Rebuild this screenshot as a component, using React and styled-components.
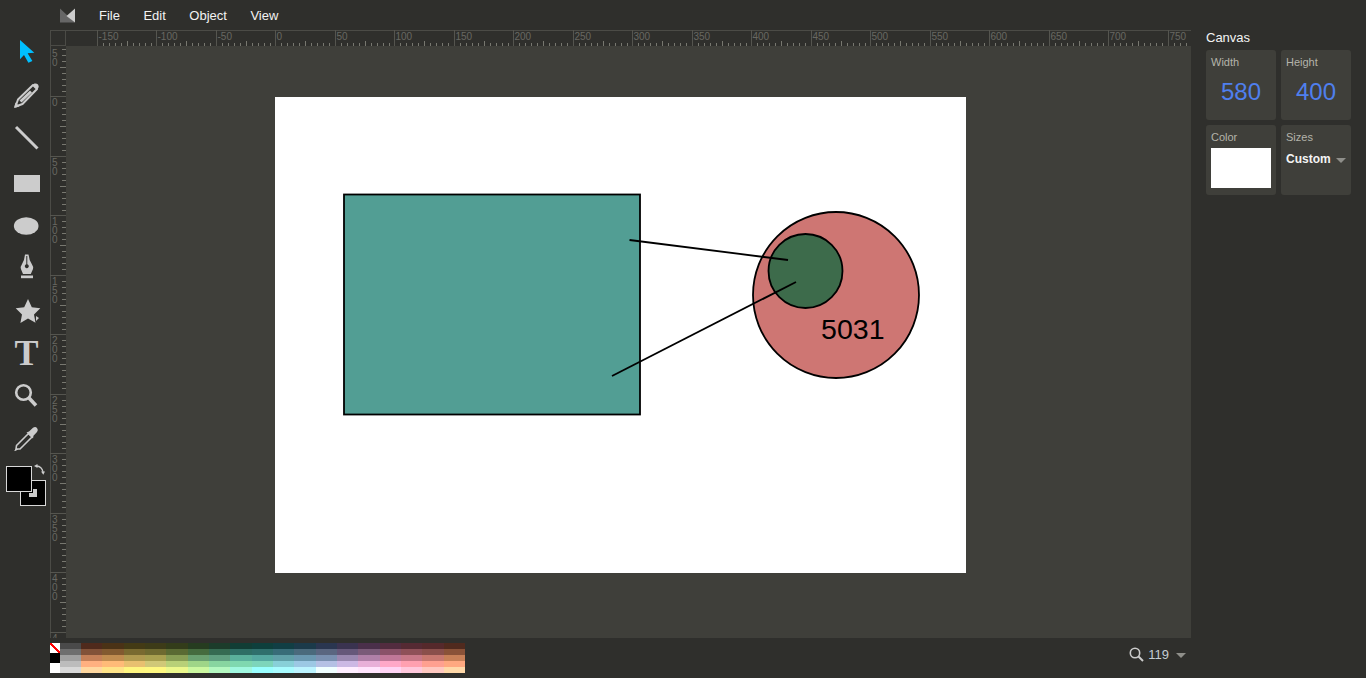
import React from 'react';
import styled, { createGlobalStyle } from 'styled-components';

const GlobalStyle = createGlobalStyle`
  html, body {
    margin: 0;
    padding: 0;
    height: 100%;
    overflow: hidden;
    background: #2f2f2c;
    font-family: "Liberation Sans", Arial, sans-serif;
  }
`;

const ICON = '#cccccc';

// palette, one array per row, first entry is the gray column
const PALETTE = [
  ['#4a4a4a', '#4f2a1c', '#4a3216', '#433a15', '#3d3b18', '#333c1a', '#263c20', '#1c3c2b', '#113d35', '#0e3f3c', '#113e44', '#1b3a4a', '#2a3650', '#3a3350', '#4a2f4a', '#522c3f', '#552a33', '#55292b', '#502a1e'],
  ['#6e6e6e', '#825238', '#825a30', '#796a30', '#6e6a30', '#5a6a33', '#456b3e', '#356b52', '#2e6e65', '#2f6f6c', '#386c78', '#4a6a7c', '#5a6680', '#66587a', '#7a5a78', '#8a5268', '#8f5058', '#8a4f4b', '#8a5238'],
  ['#a0a0a0', '#c48058', '#c08c50', '#b09a50', '#a8a050', '#889e55', '#6aa070', '#5f9f80', '#5ab09c', '#55a8a0', '#60a0a8', '#6a98b0', '#7a90b0', '#9a88b0', '#b080a8', '#c07898', '#c87888', '#c87870', '#c88058'],
  ['#bcbcbc', '#ffb080', '#ffbb78', '#e8c070', '#d0c878', '#b8d078', '#9fd588', '#88d5a0', '#7fd8b0', '#7dd5bb', '#88d0d8', '#9cc8e4', '#b4c0e4', '#ccb8e4', '#e8b0d8', '#ffa8c8', '#ffa0b0', '#ffa090', '#ffa880'],
  ['#d8d8d8', '#ffd8a0', '#ffe488', '#fff680', '#fff880', '#ecf88c', '#ccf8a0', '#b4f8c0', '#a0f8e0', '#99ffff', '#a8fcff', '#bcf4ff', '#f0ffff', '#ffeeff', '#ffe4fc', '#ffd4f4', '#ffc8dc', '#ffc8c0', '#ffd8a8'],
];

const Page = styled.div`
  display: grid;
  grid-template-columns: 50px 1141px 175px;
  grid-template-rows: 30px 608px 40px;
  width: 1366px;
  height: 678px;
  background: #2f2f2c;
  overflow: hidden;
`;

const TopBar = styled.header`
  grid-column: 1 / 4;
  grid-row: 1;
  display: flex;
  align-items: center;
  padding-left: 60px;
`;

const Logo = styled.svg`
  width: 15px;
  height: 15px;
  margin-right: 24px;
`;

const Menu = styled.nav`
  display: flex;
  gap: 23.5px;
`;

const MenuItem = styled.span`
  font-size: 13px;
  color: #f2f2f2;
`;

const Toolbar = styled.aside`
  grid-column: 1;
  grid-row: 2 / 4;
  display: flex;
  flex-direction: column;
`;

const ToolButton = styled.div`
  width: 50px;
  height: 43px;
  flex: none;
`;

const ToolIcon = styled.svg`
  display: block;
  width: 50px;
  height: 43px;
`;

const ToolLabel = styled.text`
  font-family: "Liberation Serif", "Times New Roman", serif;
  font-weight: 700;
  font-size: 36px;
  fill: ${ICON};
`;

const SwatchGroup = styled.div`
  position: relative;
  width: 50px;
  height: 40px;
  margin-top: 6px;
`;

const Swatch = styled.div`
  position: absolute;
  box-sizing: border-box;
  left: ${(p) => p.$left}px;
  top: ${(p) => p.$top}px;
  width: 26px;
  height: 26px;
  background: #000;
  border: 1px solid #d8d8d8;
`;

const SwatchIcon = styled.svg`
  position: absolute;
  left: 0;
  top: -2px;
  width: 50px;
  height: 42px;
`;

const Stage = styled.main`
  grid-column: 2;
  grid-row: 2;
  display: grid;
  grid-template-columns: 16px 1125px;
  grid-template-rows: 16px 592px;
`;

const RulerCorner = styled.div`
  box-sizing: border-box;
  border: 1px solid #4b4b46;
`;

const RulerSvg = styled.svg`
  display: block;
`;

const RulerLabel = styled.text`
  font-family: "Liberation Sans", Arial, sans-serif;
  font-size: 10px;
  fill: #686862;
`;

const Workarea = styled.div`
  background: #3f3f3a;
  padding: 51px 0 0 209px;
  overflow: hidden;
`;

const CanvasSheet = styled.svg`
  display: block;
  width: 691px;
  height: 476px;
  background: #fff;
`;

const CanvasText = styled.text`
  font-family: "Liberation Sans", Arial, sans-serif;
  font-size: 28.56px;
  fill: #000;
`;

const SidePanel = styled.aside`
  grid-column: 3;
  grid-row: 2 / 4;
  padding: 0 15px;
`;

const PanelTitle = styled.h2`
  margin: 0;
  height: 20px;
  font-size: 13px;
  font-weight: 400;
  line-height: 15px;
  color: #f4f4f4;
`;

const PanelGrid = styled.div`
  display: grid;
  grid-template-columns: 70px 70px;
  grid-auto-rows: 70px;
  gap: 5px;
`;

const Card = styled.div`
  box-sizing: border-box;
  padding: 6px 5px 0;
  background: #3f3f3a;
  border-radius: 3px;
`;

const CardLabel = styled.div`
  font-size: 11px;
  line-height: 12px;
  color: #b4b4aa;
`;

const CardValue = styled.div`
  margin-top: 8px;
  font-size: 24px;
  line-height: 32px;
  text-align: center;
  color: #4f7fee;
`;

const ColorBox = styled.div`
  margin-top: 5px;
  width: 60px;
  height: 40px;
  background: ${(p) => p.$color};
`;

const SelectRow = styled.div`
  display: flex;
  align-items: center;
  gap: 5px;
  margin-top: 9px;
  font-size: 12px;
  font-weight: 700;
  line-height: 14px;
  color: #f4f4f4;
`;

const Caret = styled.span`
  width: 0;
  height: 0;
  margin-top: 3px;
  border-style: solid;
  border-width: 5px 5px 0;
  border-color: #8f8f8a transparent transparent;
`;

const BottomBar = styled.footer`
  grid-column: 2;
  grid-row: 3;
  display: flex;
  justify-content: space-between;
  padding-top: 5px;
`;

const PaletteWrap = styled.div`
  display: flex;
  height: 30px;
`;

const SpecialColumn = styled.div`
  display: flex;
  flex-direction: column;
  width: 10px;
`;

const SpecialChip = styled.div`
  height: 10px;
  background: ${(p) => p.$bg};
`;

const ChipGrid = styled.div`
  display: grid;
  grid-template-columns: 21px repeat(18, 21.333px);
  grid-auto-rows: 6px;
`;

const Chip = styled.div`
  background: ${(p) => p.$color};
`;

const ZoomControl = styled.div`
  display: flex;
  align-items: center;
  height: 22px;
  padding-right: 5px;
  font-size: 13px;
  color: #c4ccd2;
`;

const ZoomIcon = styled.svg`
  width: 15px;
  height: 15px;
  margin-right: 4px;
`;

const ZoomCaret = styled(Caret)`
  margin: 3px 0 0 7px;
`;

function HorizontalRuler() {
  const marks = [];
  for (let k = 0; k < 19; k++) {
    const x = Math.floor(31 + 59.5 * k) + 0.5;
    marks.push(
      <g key={k}>
        <line x1={x} x2={x} y1={0} y2={16} stroke="#55554f" />
        <RulerLabel x={x + 1} y={10}>{-150 + 50 * k}</RulerLabel>
        {Array.from({ length: 9 }, (_, i) => {
          const tx = Math.round(x + 5.95 * (i + 1)) + 0.5;
          return <line key={i} x1={tx} x2={tx} y1={i === 4 ? 11 : 13} y2={16} stroke="#77776f" />;
        })}
      </g>,
    );
  }
  return (
    <RulerSvg width="1125" height="16" viewBox="0 0 1125 16">
      <line x1="0" x2="1125" y1="0.5" y2="0.5" stroke="#4b4b46" />
      {marks}
    </RulerSvg>
  );
}

function VerticalRuler() {
  const marks = [];
  for (let k = 0; k < 11; k++) {
    const y = Math.round(-9.5 + 59.5 * k) + 0.5;
    const label = String(-50 + 50 * k);
    const digits = label.replace('-', '');
    marks.push(
      <g key={k}>
        <line x1={0} x2={16} y1={y} y2={y} stroke="#55554f" />
        {digits.split('').map((ch, i) => {
          const ty = y + (label[0] === '-' ? 19 : 9.5) + 9 * i;
          // the ruler runs out under the bottom bar, only the first digit of 450 shows
          if (ty > 600) return null;
          return <RulerLabel key={i} x={2} y={ty}>{ch}</RulerLabel>;
        })}
        {Array.from({ length: 9 }, (_, i) => {
          const ty = Math.round(y + 5.95 * (i + 1)) + 0.5;
          return <line key={i} x1={i === 4 ? 10 : 12} x2={16} y1={ty} y2={ty} stroke="#77776f" />;
        })}
      </g>,
    );
  }
  return (
    <RulerSvg width="16" height="592" viewBox="0 0 16 592">
      <line x1="0.5" x2="0.5" y1="0" y2="592" stroke="#4b4b46" />
      {marks}
    </RulerSvg>
  );
}

const TOOLS = [
  <path key="select" d="M20 10 L34.3 22.7 L27.6 23.2 L32.4 31 L28.4 32.7 L24 25 L20 29.3 Z" fill="#00bfff" />,
  <g key="pencil">
    <path d="M15.5 33.5 L18 26.5 L33 12 L37 16 L22.5 31 Z" fill="none" stroke={ICON} strokeWidth="2" strokeLinejoin="round" />
    <path d="M14 35 L15.5 29.5 L19.5 33.5 Z" fill={ICON} />
    <path d="M19.5 27.5 L30 17.5 L32 19.5 L21.5 29.5 Z" fill={ICON} />
    <path d="M33 11.5 L34.5 10.5 Q36.5 10 38 11.5 Q39.3 13.2 38.3 15 L37 16.5 Z" fill={ICON} />
  </g>,
  <line key="line" x1="16" y1="11" x2="37.5" y2="32.5" stroke={ICON} strokeWidth="3" />,
  <rect key="rect" x="14" y="16" width="26" height="17" fill={ICON} />,
  <ellipse key="ellipse" cx="26.2" cy="24" rx="12.3" ry="8.8" fill={ICON} />,
  <g key="pen">
    <path fillRule="evenodd" d="M25 9.5 L28.5 9.5 Q29 15 32 19.5 Q33.8 22 33 24 L30.8 29 L23 29 L20.9 24 Q20 22 21.8 19.5 Q24.6 15 25 9.5 Z M26.3 11 L26.3 19.2 A2 2 0 1 0 27.3 19.2 L27.3 11 Z" fill={ICON} />
    <rect x="21" y="30.5" width="12" height="2.7" fill={ICON} />
  </g>,
  <g key="star">
    <polygon points="28,11 31.8,19.3 40.3,20.3 34,26.5 35.5,34.8 28,30.6 20.4,35 22,26.5 15.7,20.3 24.2,19.3" fill={ICON} />
    <polygon points="36,28 39,30 36,33" fill={ICON} />
  </g>,
  <ToolLabel key="text" x="14.5" y="34">T</ToolLabel>,
  <g key="zoom">
    <circle cx="23.5" cy="18.5" r="7.3" fill="none" stroke={ICON} strokeWidth="2.6" />
    <line x1="29" y1="24" x2="36" y2="31.5" stroke={ICON} strokeWidth="3.6" />
  </g>,
  <g key="eyedropper">
    <path d="M16 32 L16.5 28.5 L28.5 16.5 L32 20 L20 32 Z" fill="none" stroke={ICON} strokeWidth="1.6" strokeLinejoin="round" />
    <path d="M14.8 33.5 L16.5 31.5 L17.5 32.5 Z" fill={ICON} stroke={ICON} />
    <path d="M26.5 15.5 L29 14.5 L33 10.8 Q35.3 9.3 37 11 Q38.7 12.8 37 15 L33.5 18.8 L33 21.5 Z" fill={ICON} />
  </g>,
];

export default function App() {
  return (
    <Page>
      <GlobalStyle />
      <TopBar>
        <Logo viewBox="0 0 15 15">
          <polygon points="0,0.5 8,8 15,14.5 0,14.5" fill="#666" />
          <polygon points="15,0.5 15,14.5 6.5,8" fill="#ccc" />
        </Logo>
        <Menu>
          <MenuItem>File</MenuItem>
          <MenuItem>Edit</MenuItem>
          <MenuItem>Object</MenuItem>
          <MenuItem>View</MenuItem>
        </Menu>
      </TopBar>

      <Toolbar>
        {TOOLS.map((icon) => (
          <ToolButton key={icon.key}>
            <ToolIcon viewBox="0 0 50 43">{icon}</ToolIcon>
          </ToolButton>
        ))}
        <SwatchGroup>
          <Swatch $left={20} $top={14} />
          <Swatch $left={6} $top={0} />
          <SwatchIcon viewBox="0 0 50 42">
            <path d="M33 25 H37 V33 H29 V29 H33 Z" fill="#ccc" />
            <path d="M36.5 2 Q42 2.5 43 8" fill="none" stroke="#ccc" strokeWidth="1.3" />
            <polygon points="34,2 37.5,0 37.5,4" fill="#ccc" />
            <polygon points="41,7.5 45,7.5 43.3,10.8" fill="#ccc" />
          </SwatchIcon>
        </SwatchGroup>
      </Toolbar>

      <Stage>
        <RulerCorner />
        <HorizontalRuler />
        <VerticalRuler />
        <Workarea>
          <CanvasSheet viewBox="0 0 691 476">
            <rect x="69" y="97.5" width="296" height="220" fill="#529e94" stroke="#000" strokeWidth="1.8" />
            <circle cx="561" cy="198" r="83" fill="#ce7673" stroke="#000" strokeWidth="1.8" />
            <circle cx="530.5" cy="174" r="37" fill="#3d6b4b" stroke="#000" strokeWidth="1.8" />
            <line x1="354.5" y1="143" x2="513" y2="163" stroke="#000" strokeWidth="1.8" />
            <line x1="337" y1="279" x2="521" y2="185" stroke="#000" strokeWidth="1.8" />
            <CanvasText x="546" y="242">5031</CanvasText>
          </CanvasSheet>
        </Workarea>
      </Stage>

      <SidePanel>
        <PanelTitle>Canvas</PanelTitle>
        <PanelGrid>
          <Card>
            <CardLabel>Width</CardLabel>
            <CardValue>580</CardValue>
          </Card>
          <Card>
            <CardLabel>Height</CardLabel>
            <CardValue>400</CardValue>
          </Card>
          <Card>
            <CardLabel>Color</CardLabel>
            <ColorBox $color="#fff" />
          </Card>
          <Card>
            <CardLabel>Sizes</CardLabel>
            <SelectRow>
              Custom
              <Caret />
            </SelectRow>
          </Card>
        </PanelGrid>
      </SidePanel>

      <BottomBar>
        <PaletteWrap>
          <SpecialColumn>
            <SpecialChip $bg="linear-gradient(to top right, #fff 42%, #f00 42%, #f00 58%, #fff 58%)" />
            <SpecialChip $bg="#000" />
            <SpecialChip $bg="#fff" />
          </SpecialColumn>
          <ChipGrid>
            {PALETTE.flatMap((row, r) => row.map((color, c) => <Chip key={`${r}-${c}`} $color={color} />))}
          </ChipGrid>
        </PaletteWrap>
        <ZoomControl>
          <ZoomIcon viewBox="0 0 15 15">
            <circle cx="6" cy="6" r="4.7" fill="none" stroke={ICON} strokeWidth="1.6" />
            <line x1="9.5" y1="9.5" x2="14" y2="14" stroke={ICON} strokeWidth="2" />
          </ZoomIcon>
          119
          <ZoomCaret />
        </ZoomControl>
      </BottomBar>
    </Page>
  );
}
